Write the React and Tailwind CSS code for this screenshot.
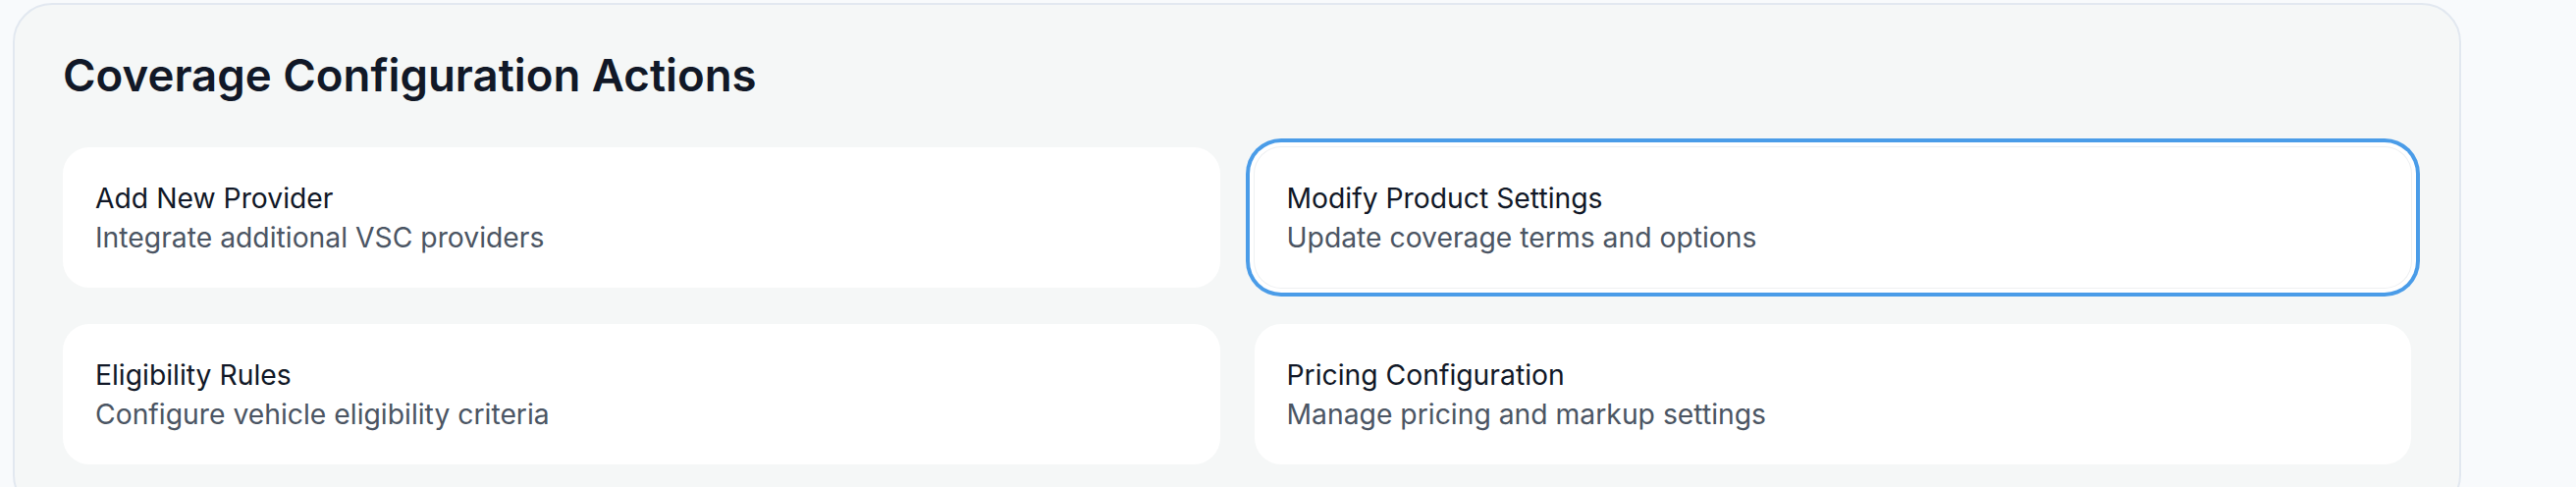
import React from "react";

const actions = [
  { title: "Add New Provider", desc: "Integrate additional VSC providers" },
  { title: "Modify Product Settings", desc: "Update coverage terms and options", focused: true },
  { title: "Eligibility Rules", desc: "Configure vehicle eligibility criteria" },
  { title: "Pricing Configuration", desc: "Manage pricing and markup settings" },
];

const ActionCard = ({ title, desc, focused }) => (
  <button
    type="button"
    className={
      "text-left bg-white rounded-[27px] pl-[33px] pr-[33px] pt-[32px] pb-[31px] " +
      (focused
        ? "shadow-[0_0_0_1px_#eef0f2,0_0_0_5px_#ffffff,0_0_0_9px_#4a9ce8]"
        : "")
    }
  >
    <div className="text-[28.3px] leading-[40px] font-normal text-[#111827]">{title}</div>
    <div className="text-[28.3px] leading-[40px] text-[#4b5563]">{desc}</div>
  </button>
);

export default function App() {
  return (
    <div
      className="min-h-screen bg-[#f8fafc] pl-[13px] pt-[3px]"
      style={{ fontFamily: "Inter, 'Noto Sans', sans-serif" }}
    >
      <div className="w-[2494px] rounded-[40px] border-2 border-[#e2e8f0] bg-[#f5f7f7] px-[49px] pt-[42px] pb-[49px]">
        <h2 className="text-[45.6px] leading-[60px] font-semibold text-[#111827]">
          Coverage Configuration Actions
        </h2>
        <div className="mt-[43px] grid grid-cols-2 gap-x-[35px] gap-y-[37px]">
          {actions.map((a) => (
            <ActionCard key={a.title} {...a} />
          ))}
        </div>
      </div>
    </div>
  );
}
